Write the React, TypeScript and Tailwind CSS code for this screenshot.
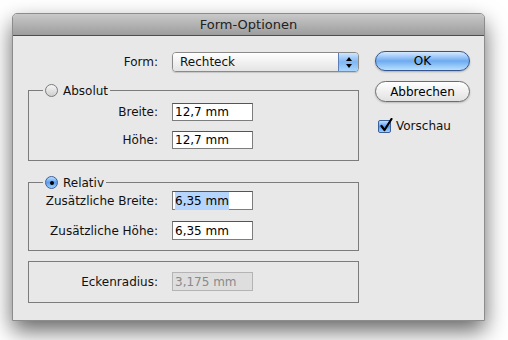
import React from "react";

const font = "font-['DejaVu_Sans',sans-serif]";

function TextField(props: { value: string; selected?: boolean; disabled?: boolean; h?: string }) {
  const { value, selected, disabled } = props;
  return (
    <div
      className={`w-[81px] ${props.h ?? "h-[19px]"} flex items-center pl-[2px] border border-[#7d7d7d] border-t-[#555] ${
        disabled ? "bg-[#dedede] border-[#b4b4b4] border-t-[#b4b4b4] text-[#8a8a8a]" : "bg-white text-black"
      }`}
    >
      <span className={selected ? "bg-[#b5d5ff]" : ""}>{value}</span>
    </div>
  );
}

function Radio(props: { on?: boolean }) {
  return props.on ? (
    <div className="w-[13px] h-[13px] rounded-full border border-[#3c5f9c] bg-gradient-to-b from-[#bfe0ff] via-[#5a9cea] to-[#9fd0ff] flex items-center justify-center">
      <div className="w-[4px] h-[4px] rounded-full bg-black" />
    </div>
  ) : (
    <div className="w-[13px] h-[13px] rounded-full border border-[#7a7a7a] bg-gradient-to-b from-[#f6f6f6] to-[#cfcfcf]" />
  );
}

function Row(props: { label: string; children: React.ReactNode }) {
  return (
    <div className="flex items-center">
      <div className="w-[129px] text-right">{props.label}</div>
      <div className="ml-[14px]">{props.children}</div>
    </div>
  );
}

export default function App() {
  return (
    <div className={`min-h-[340px] bg-white pt-[13px] pl-[12px] text-[12px] text-[#111] ${font}`}>
      <div className="w-[473px] h-[308px] bg-[#e8e8e8] rounded-t-[5px] border border-[#8c8c8c] shadow-[0_10px_22px_rgba(0,0,0,0.6)] flex flex-col">
        <div className="h-[22px] rounded-t-[4px] bg-gradient-to-b from-[#c9c9c9] to-[#9d9d9d] border-b border-[#4d4d4d] flex items-center justify-center text-[13px] text-[#222]">
          Form-Optionen
        </div>

        <div className="flex pl-[15px] pt-[16px]">
          <div className="w-[331px] flex flex-col">
            <div className="flex items-center h-[20px]">
              <div className="w-[130px] text-right">Form:</div>
              <div className="ml-[14px] w-[187px] h-[20px] rounded-[4px] border border-[#8a8a8a] flex overflow-hidden shadow-[0_1px_1px_rgba(0,0,0,0.15)]">
                <div className="flex-1 bg-gradient-to-b from-white to-[#e4e4e4] pl-[7px] flex items-center">Rechteck</div>
                <div className="w-[20px] border-l border-[#5a7fb8] bg-gradient-to-b from-[#cfe6ff] via-[#7fb6f2] to-[#a9d6ff] flex flex-col items-center justify-center gap-[3px]">
                  <div className="w-0 h-0 border-l-[3px] border-r-[3px] border-b-[4px] border-l-transparent border-r-transparent border-b-black" />
                  <div className="w-0 h-0 border-l-[3px] border-r-[3px] border-t-[4px] border-l-transparent border-r-transparent border-t-black" />
                </div>
              </div>
            </div>

            <fieldset className="mt-[11px] border border-[#7c7c7c] pb-[11px]">
              <legend className="ml-[14px] px-[2px] flex items-center gap-[5px] h-[15px]">
                <Radio />
                <span>Absolut</span>
              </legend>
              <div className="flex flex-col gap-[10px] pt-[5px]">
                <Row label="Breite:">
                  <TextField value="12,7 mm" h="h-[18px]" />
                </Row>
                <Row label="Höhe:">
                  <TextField value="12,7 mm" h="h-[18px]" />
                </Row>
              </div>
            </fieldset>

            <fieldset className="mt-[14px] border border-[#7c7c7c] pb-[10px]">
              <legend className="ml-[14px] px-[2px] flex items-center gap-[5px] h-[15px]">
                <Radio on />
                <span>Relativ</span>
              </legend>
              <div className="flex flex-col gap-[11px] pt-[1px]">
                <Row label="Zusätzliche Breite:">
                  <TextField value="6,35 mm" selected />
                </Row>
                <Row label="Zusätzliche Höhe:">
                  <TextField value="6,35 mm" />
                </Row>
              </div>
            </fieldset>

            <div className="mt-[10px] border border-[#7c7c7c] pt-[10px] pb-[11px]">
              <Row label="Eckenradius:">
                <TextField value="3,175 mm" disabled />
              </Row>
            </div>
          </div>

          <div className="ml-[16px] flex flex-col -mt-[1px]">
            <button className="w-[95px] h-[20px] rounded-full border border-[#36558f] bg-gradient-to-b from-[#d6eaff] via-[#6eaaf0] to-[#b8e0ff] text-[12px] text-black leading-none shadow-[0_1px_2px_rgba(0,0,0,0.25)]">
              OK
            </button>
            <button className="mt-[10px] w-[95px] h-[21px] rounded-full border border-[#6d6d6d] bg-gradient-to-b from-white via-[#f0f0f0] to-[#e2e2e2] text-[12px] text-black leading-none shadow-[0_1px_2px_rgba(0,0,0,0.2)]">
              Abbrechen
            </button>
            <div className="mt-[15px] ml-[3px] flex items-center gap-[5px]">
              <div className="w-[13px] h-[13px] rounded-[2px] border border-[#3c5f9c] bg-gradient-to-b from-[#bfe0ff] via-[#5a9cea] to-[#9fd0ff] relative">
                <svg viewBox="0 0 14 14" className="absolute -top-[3px] left-0 w-[14px] h-[14px]">
                  <path d="M2.5 8 L5.5 12 L12.5 1" fill="none" stroke="#000" strokeWidth="2.2" strokeLinecap="round" strokeLinejoin="round" />
                </svg>
              </div>
              <span>Vorschau</span>
            </div>
          </div>
        </div>
      </div>
    </div>
  );
}
